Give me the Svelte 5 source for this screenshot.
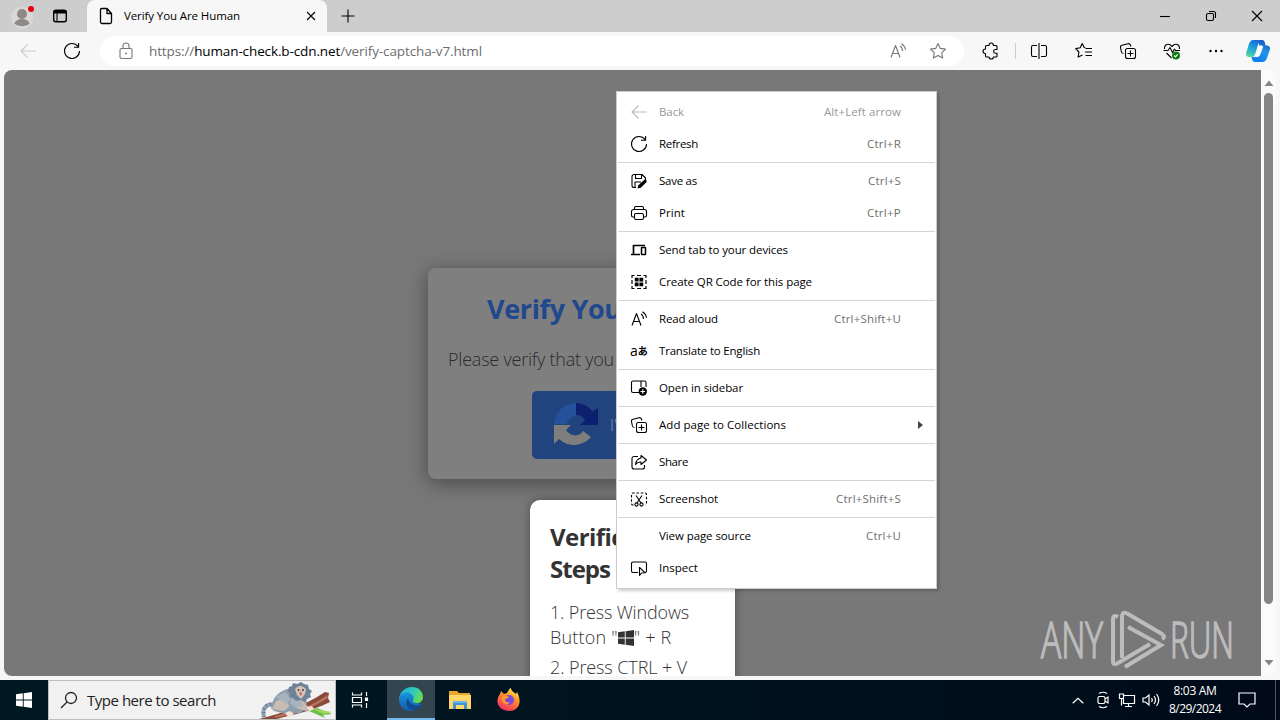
<script lang="ts">
	type Item = { icon?: string; label: string; keys?: string; disabled?: boolean; more?: boolean; w: number; kw?: number };

	const groups: Item[][] = [
		[
			{ icon: 'back', label: 'Back', keys: 'Alt+Left arrow', disabled: true, w: 25, kw: 77 },
			{ icon: 'refresh', label: 'Refresh', keys: 'Ctrl+R', w: 39, kw: 34 }
		],
		[
			{ icon: 'save', label: 'Save as', keys: 'Ctrl+S', w: 38, kw: 33 },
			{ icon: 'print', label: 'Print', keys: 'Ctrl+P', w: 26, kw: 34 }
		],
		[
			{ icon: 'devices', label: 'Send tab to your devices', w: 129 },
			{ icon: 'qr', label: 'Create QR Code for this page', w: 153 }
		],
		[
			{ icon: 'aloud', label: 'Read aloud', keys: 'Ctrl+Shift+U', w: 59, kw: 67 },
			{ icon: 'translate', label: 'Translate to English', w: 101 }
		],
		[{ icon: 'sidebar', label: 'Open in sidebar', w: 84 }],
		[{ icon: 'collections', label: 'Add page to Collections', more: true, w: 127 }],
		[{ icon: 'share', label: 'Share', w: 29 }],
		[{ icon: 'screenshot', label: 'Screenshot', keys: 'Ctrl+Shift+S', w: 59, kw: 65 }],
		[
			{ label: 'View page source', keys: 'Ctrl+U', w: 92, kw: 35 },
			{ icon: 'inspect', label: 'Inspect', w: 39 }
		]
	];

	// Squeezes a label to a given width by spreading the difference over its letters.
	function fit(node: HTMLElement, width?: number) {
		if (!width) return;
		const natural = node.getBoundingClientRect().width;
		const count = node.textContent?.trim().length || 1;
		node.style.letterSpacing = `${(width - natural) / count}px`;
	}
</script>

{#snippet icon(name: string)}
	<svg class="icon" viewBox="0 0 18 18" width="18" height="18">
		{#if name === 'back'}
			<path d="M17 9H2M8.500 2.500 2 9l6.500 6.500" />
		{:else if name === 'refresh'}
			<path d="M15 4.500A7.500 7.500 0 1 0 16.500 9M15.600 1v4.200H11" />
		{:else if name === 'save'}
			<path d="M6 15.500H4a2 2 0 0 1-2-2v-9a2 2 0 0 1 2-2h8l3.500 3.500v2M5.500 2.500v4h6v-4M5 15v-5h6" />
			<path class="solid" d="m7.500 16.500.8-3.300 5.800-5.300c1.500-1 3.300.8 2.200 2.300l-5.500 5.600z" />
		{:else if name === 'print'}
			<path d="M4.500 13H3a1.500 1.500 0 0 1-1.500-1.500v-4a2 2 0 0 1 2-2h11a2 2 0 0 1 2 2v4A1.500 1.500 0 0 1 15 13h-1.500M4.500 5.500V4A1.500 1.500 0 0 1 6 2.500h6A1.500 1.500 0 0 1 13.500 4v1.500" />
			<rect x="4.500" y="9.500" width="9" height="6" rx="1.500" />
		{:else if name === 'devices'}
			<path stroke-width="1.700" d="M3.500 13V4.500H15M1 13.500h9" />
			<rect x="11.500" y="6.500" width="4" height="7" rx=".5" stroke-width="1.500" />
		{:else if name === 'qr'}
			<path stroke-width="1.200" d="M2 5V2.500h2.500M13.500 2.500H16V5M16 13v2.500h-2.500M4.500 15.500H2V13M2 7v4M16 7v4M7 2.500h4M7 15.500h4" />
			<path class="solid" d="M4.800 4.800h3.800v3.800H4.800zM9.400 4.800h3.800v3.800H9.400zM4.800 9.400h3.800v3.800H4.800zM9.400 9.400h3.800v3.800H9.400z" />
		{:else if name === 'aloud'}
			<path d="m2 15.500 4.500-12 4.500 12M3.500 11.500h6M11 4q2.500 1.500 2.500 5M12.500 1.800q3.500 2.200 4 6" />
		{:else if name === 'sidebar'}
			<path d="M9 13.500H3A1.500 1.500 0 0 1 1.500 12V3.500A1.500 1.500 0 0 1 3 2h11.500A1.500 1.500 0 0 1 16 3.500V8M11 2v6" />
			<circle class="solid" cx="12.800" cy="12.500" r="4.200" />
			<path class="cut" d="M10.500 12.500h4.600M12.800 10.200v4.600" />
		{:else if name === 'collections'}
			<rect x="6.500" y="6.500" width="10" height="10" rx="2" />
			<path d="M11.500 8.500v6M8.500 11.500h6M4.500 11.500c-1.500 0-2-1-2.200-2L1.500 5.500c-.3-1.300.4-2 1.500-2.300l6-1.500c1.200-.3 2 .3 2.400 1.300l.6 1.500" />
		{:else if name === 'share'}
			<path d="M8 3.500H4a2 2 0 0 0-2 2V14a2 2 0 0 0 2 2h8.500a2 2 0 0 0 2-2v-2" />
			<path d="M11 2.500 16.500 7 11 11.500V9C8.500 9 6.500 10 5.500 11.500 6 8 8 5.500 11 5z" />
		{:else if name === 'screenshot'}
			<path stroke-dasharray="2.500 1.800" d="M3.500 15H3a1.500 1.500 0 0 1-1.500-1.500v-9A1.500 1.500 0 0 1 3 3h12a1.500 1.500 0 0 1 1.500 1.500v9A1.500 1.500 0 0 1 15 15" />
			<path d="m6 5.500 5 7.500M12 5.500 7 13" />
			<circle cx="6.500" cy="14.500" r="1.600" /><circle cx="11.500" cy="14.500" r="1.600" />
		{:else if name === 'inspect'}
			<path d="M8 13.500H3A1.500 1.500 0 0 1 1.500 12V4.500A1.500 1.500 0 0 1 3 3h12a1.500 1.500 0 0 1 1.500 1.500V12a1.500 1.500 0 0 1-1.500 1.500" />
			<path d="M9.500 8.500v8l2-2.500 3.500-.3z" />
		{:else if name === 'star'}
			<path d="m9 1.500 2.300 4.900 5.200.7-3.800 3.700.9 5.300L9 13.600l-4.600 2.500.9-5.300L1.500 7.100l5.200-.7z" />
		{:else if name === 'lock'}
			<rect x="3" y="6.500" width="12" height="10" rx="1.500" />
			<path d="M6 6.500V4a3 3 0 0 1 6 0v2.500" /><circle class="solid" cx="9" cy="11.500" r=".9" />
		{:else if name === 'puzzle'}
			<path d="M4.500 3.500H7C7 1.800 8 1 9.200 1s2.200.8 2.200 2.500H14a1 1 0 0 1 1 1V7.500h-1.500a1.900 1.900 0 0 0 0 3.800H15V14a1 1 0 0 1-1 1h-2.600c0 1.300-1 2-2.200 2S7 16.300 7 15H4.500a1 1 0 0 1-1-1v-2.500C2 11.500 1 10.500 1 9.300s1-2.300 2.500-2.300V4.500a1 1 0 0 1 1-1z" />
		{:else if name === 'split'}
			<path d="M7 3.500H3A1.500 1.500 0 0 0 1.500 5v8A1.500 1.500 0 0 0 3 14.500h4M11 3.500h4A1.500 1.500 0 0 1 16.500 5v8a1.500 1.500 0 0 1-1.500 1.500h-4M9 1v16" />
		{:else if name === 'favourites'}
			<path d="M10.500 5.800 9.200 5.500 7.200 1.500 5.200 5.800l-4.500.8 3.200 3.400-.8 5L7.500 13M10.500 6.500H17M10 10h7M10.500 13.500H17" />
		{:else if name === 'heart'}
			<path d="M1.500 7C.8 3.500 4 1.200 7 2.700l2 1.800 2-1.800c3-1.500 6.200.8 5.500 4.300M.5 8.500h4.500l2-3 2.500 5 2-3.500 1 1.500h4.500M3.500 11l5 5" />
			<circle cx="13" cy="13.500" r="4" fill="#107c10" stroke="none" />
			<path class="cut" d="m11.200 13.500 1.300 1.300 2.200-2.500" />
		{:else if name === 'tabs'}
			<rect x="2.700" y="3.200" width="12.600" height="11.600" rx="2" stroke-width="1.400" />
			<path class="solid" d="M3 3h12v3.500H3z" /><path d="M6 6v8" />
		{:else if name === 'page'}
			<path stroke-width="1.300" d="M4.500 1.500H10l4.500 5v8.500a1.500 1.500 0 0 1-1.500 1.500H5A1.500 1.500 0 0 1 3.500 15V2.500a1 1 0 0 1 1-1zM10 1.500v5h4.500" />
		{/if}
	</svg>
{/snippet}

{#snippet winlogo()}
	<svg viewBox="0 0 16 16" width="16" height="16" fill="currentColor"><path d="m0 2.300 6.800-1v6.200H0zM7.700 1.200 16 0v7.500H7.700zM0 8.400h6.800v6.300l-6.800-1zM7.700 8.400H16V16l-8.300-1.200z" /></svg>
{/snippet}

<div class="screen">
	<header class="tabbar">
		<div class="profile">
			<svg viewBox="0 0 24 28" width="24" height="28">
				<circle cx="11" cy="16" r="11" fill="#d8d8d8" />
				<circle cx="11" cy="12" r="5" fill="#8e8886" />
				<path d="M3.500 22a7.500 5 0 0 1 15 0 11 8 0 0 1-15 0z" fill="#8e8886" />
				<circle cx="20" cy="7" r="3" fill="#e3000b" />
			</svg>
		</div>
		<div class="tabs-button">{@render icon('tabs')}</div>
		<div class="tab">
			{@render icon('page')}
			<span class="tab-title"><span use:fit={116}>Verify You Are Human</span></span>
			<svg class="line" viewBox="0 0 10 10" width="10" height="10"><path d="m1 1 8 8M9 1 1 9" /></svg>
		</div>
		<svg class="line new-tab" viewBox="0 0 14 14" width="14" height="14"><path d="M7 .5v13M.5 7h13" /></svg>
		<div class="window-buttons">
			<svg class="line" viewBox="0 0 12 12" width="12" height="12"><path d="M1 6.500h10" /></svg>
			<svg class="line" viewBox="0 0 12 12" width="12" height="12"><rect x="1.500" y="3.500" width="7" height="7" rx="1.500" /><path d="M4 1.500h4.500a2 2 0 0 1 2 2V8" /></svg>
			<svg class="line" viewBox="0 0 12 12" width="12" height="12"><path d="m1 1 10 10M11 1 1 11" /></svg>
		</div>
	</header>

	<nav class="toolbar">
		<span class="faint">{@render icon('back')}</span>
		<span class="reload">{@render icon('refresh')}</span>
		<div class="address">
			<span class="grey">{@render icon('lock')}</span>
			<span class="url"><span use:fit={333}>https://<b>human-check.b-cdn.net</b>/verify-captcha-v7.html</span></span>
			<span class="grey">{@render icon('aloud')}</span>
			<span class="grey">{@render icon('star')}</span>
		</div>
		<div class="actions">
			{@render icon('puzzle')}
			<i></i>
			{@render icon('split')}
			<span class="favourites">{@render icon('favourites')}</span>
			{@render icon('collections')}
			{@render icon('heart')}
			<svg class="dots" viewBox="0 0 18 18" width="18" height="18"><circle cx="3.500" cy="9" r="1.200" /><circle cx="9" cy="9" r="1.200" /><circle cx="14.500" cy="9" r="1.200" /></svg>
			<svg class="copilot" viewBox="0 0 24 24" width="24" height="24">
				<defs>
					<linearGradient id="cpa" x1=".6" y1="0" x2=".3" y2="1"><stop offset="0" stop-color="#1569d8" /><stop offset=".5" stop-color="#20a5d8" /><stop offset="1" stop-color="#57d69a" /></linearGradient>
					<linearGradient id="cpb" x1=".7" y1="0" x2=".4" y2="1"><stop offset="0" stop-color="#1452b8" /><stop offset=".5" stop-color="#2196ea" /><stop offset="1" stop-color="#0f7ff0" /></linearGradient>
				</defs>
				<path fill="url(#cpb)" d="M12 1h4c2 0 2.500 1.500 3 3l.6 2.500H21c2.500 0 3.500 2 2.700 4.500l-2.500 7.500c-1 3-2.500 4.500-5 4.500H9c-2 0-2.600-1.500-3-3l-.5-2h3c2 0 2.500-1 3-2.500L13.500 8z" />
				<path fill="url(#cpa)" d="M7.500 1H15c-1.700.5-2.200 2-2.600 3.500L9.500 14c-.8 2.500-2 4-4 4H3c-2.500 0-3.500-2-2.700-4.500l2.500-8C3.700 2.500 5 1 7.500 1z" />
				<path fill="#fff" d="M12.500 6.500h3c1.300 0 1.700 1 1.300 2.200L14.500 15c-.7 2-1.700 3-3.500 3H8.500c1.300-.5 1.800-1.800 2.200-3z" />
			</svg>
		</div>
	</nav>

	<div class="content">
		<main class="page">
			<section class="card">
				<h1><span use:fit={291}>Verify You Are Human</span></h1>
				<p><span use:fit={369}>Please verify that you are a human to continue.</span></p>
				<div class="verify">
					<svg viewBox="0 0 46 46" width="46" height="46">
						<path fill="#25509a" d="M1 22A22 22 0 0 1 23 1v13a9 9 0 0 0-9 8z" />
						<path fill="#0d2070" d="M23 1a22 22 0 0 1 16.500 8.500L45 6v17H27l5-5a10 10 0 0 0-9-5z" />
						<path fill="#7e7e7d" d="M1 23h17l-5 5c4 7 14 7 17 1l8 6A22 22 0 0 1 6 37l-5 5z" />
					</svg>
					<span>I'm not a robot</span>
				</div>
			</section>

			<section class="steps">
				<h2><span use:fit={133}>Verification</span><br /><span use:fit={60}>Steps</span></h2>
				<p><span use:fit={139}>1. Press Windows</span><br /><span class="button-line">Button "{@render winlogo()}" + R</span></p>
				<p><span use:fit={137}>2. Press CTRL + V</span></p>
			</section>

			<div class="watermark">
				<svg viewBox="0 0 194 64" width="194" height="64">
					<text x="2" y="50" textLength="62" lengthAdjust="spacingAndGlyphs">ANY</text>
					<text x="131" y="50" textLength="64" lengthAdjust="spacingAndGlyphs">RUN</text>
					<path d="M79 9q-5-3-5 3v41q0 5 5 2l32-19M83 50V10q0-8 6-4l34 20q4 3 0 5M89 19l33 18-36 22" />
				</svg>
			</div>
		</main>
		<div class="scrollbar">
			<svg viewBox="0 0 10 6" width="10" height="6"><path d="M.5 6 5 .5 9.500 6z" /></svg>
			<div class="thumb"></div>
			<svg viewBox="0 0 10 6" width="10" height="6"><path d="M.5 0 5 5.500 9.500 0z" /></svg>
		</div>
	</div>

	<footer class="taskbar">
		<div class="start">{@render winlogo()}</div>
		<div class="search">
			<svg class="line" viewBox="0 0 18 18" width="18" height="18"><circle cx="11" cy="7" r="5.500" stroke-width="1.300" /><path stroke-width="1.300" d="m7 11-6 6" /></svg>
			<span class="search-text"><span use:fit={129}>Type here to search</span></span>
			<svg class="monkey" viewBox="0 0 76 38" width="76" height="38">
				<path fill="#6cc04c" d="m50 30 8-3 15 6-9 1 2 3z" />
				<path fill="#a5d65a" d="m54 28 19 3-8 2z" />
				<path fill="#8b4a39" d="M0 38c20-5 44-12 66-27l4 1-1 5 2 4c-20 10-39 13-53 17z" />
				<path fill="#b4715c" d="M16 35c20-5 38-10 52-21l1 3c-15 10-33 16-53 20z" />
				<path fill="none" stroke="#8fa3b8" stroke-width="4" d="M20 24C6 21 3 28 5 36" />
				<path fill="none" stroke="#66788c" stroke-width="4" stroke-dasharray="1 3" d="M20 24C6 21 3 28 5 36" />
				<path fill="#8e9eae" d="M12 27c2-12 8-17 20-20l14 8c3 7 2 12-4 17l-15 1-12-3z" />
				<path fill="#c9bcb2" d="M17 20c7-3 13 0 13 6l-5 4-12-2zM31 20c6-5 13-4 16 4l6 4-6 2-10-3z" />
				<path fill="#a7b3bd" d="m17 16 9-5 6 6-4 6-7-4zM33 17l8 2 4 6-8 2-6-4z" />
				<path fill="#6f8398" d="m29 10 1-4 3-1 1-3 4 1 4-2 3 2 4 1 1 4 3 2-2 3 1 3-4 2-2 3-5-2-4 1-3-3-4-1 1-3z" />
				<path fill="#d3c3bb" d="M36 8q5-6 11 0l-1 5-4 5-4-4z" />
				<circle cx="39.500" cy="9" r="1" fill="#5c3630" /><circle cx="44" cy="9" r="1" fill="#5c3630" />
				<path fill="#c76d58" d="m42 10 1 3-1 2-2-2z" />
				<path fill="#f6e1d7" d="m26 32 5-2 4 3-5 4zM48 26l5-1 2 3-5 2z" />
			</svg>
		</div>
		<div class="task task-view">
			<svg viewBox="0 0 18 18" width="18" height="18" fill="none" stroke="#fff" stroke-width="1.200"><path d="M1.500 1.500v2.500h9V1.500M1.500 16.500V14h9v2.500M1.500 6.500h9v5h-9zM15.500 1v4M15.500 12v5" /><path fill="#fff" d="M14.500 7h2v2.500h-2z" /></svg>
		</div>
		<div class="task active">
			<svg viewBox="0 0 24 24" width="24" height="24">
				<defs>
					<linearGradient id="eda" x1="0" y1="0" x2="1" y2=".4"><stop offset="0" stop-color="#20a8df" /><stop offset=".6" stop-color="#30c9bd" /><stop offset="1" stop-color="#62dc58" /></linearGradient>
					<linearGradient id="edb" x1="0" y1="0" x2="0" y2="1"><stop offset="0" stop-color="#1794dd" /><stop offset="1" stop-color="#135cad" /></linearGradient>
				</defs>
				<path fill="url(#eda)" d="M0 12C1 3 8 0 13 0c7 0 11 5 11 10 0 4-3 6-6 6-3 0-5-1-4-3 2-5-7-9-14-1z" />
				<path fill="url(#edb)" d="M0 12C1 6 8 4 12 7c3 2 3 4 2 6-1 2 1 4 5 3l3 1c-3 5-7 7-11 7C5 24 0 19 0 12z" />
				<path fill="#124b91" d="M9 11c-4 6 0 12 6 12 3-1 6-3 7-5-6 2-12-1-13-7z" />
			</svg>
		</div>
		<div class="task">
			<svg viewBox="0 0 22 18" width="22" height="18"><path fill="#e9a52b" d="M0 0h8l2 2h11v4H0z" /><path fill="#ffd667" d="M0 4h22v14H0z" /><path fill="#3a94d6" d="M4 10h14v8h-3v-4H7v4H4z" /><path fill="#69b5e8" d="M4 10h14v2H4z" /></svg>
		</div>
		<div class="task">
			<svg viewBox="0 0 24 24" width="24" height="24">
				<defs><linearGradient id="ff" x1=".8" y1="0" x2=".3" y2="1"><stop offset="0" stop-color="#fff04a" /><stop offset=".45" stop-color="#ff8a2a" /><stop offset="1" stop-color="#f12c64" /></linearGradient></defs>
				<path fill="url(#ff)" d="M3 6l1-3 3 3 3-1c1-2 2-4 4-5 0 3 3 4 5 6l1-2c5 9 3 19-8 19C2 23-3 14 3 6z" />
				<circle cx="12" cy="12" r="5" fill="#7849dc" />
				<path fill="#ff9b2b" d="M5 9c3-2 5-1 7 0-1 2-4 1-4 3s3 3 5 2c-3 5-9 1-8-5z" />
			</svg>
		</div>
		<div class="tray">
			<svg viewBox="0 0 12 7" width="12" height="7"><path d="m.7 6.300 5.300-5 5.300 5" /></svg>
			<svg viewBox="0 0 14 18" width="14" height="18"><rect x="2" y="5.500" width="7" height="7" rx="1.500" /><path d="m9 8 3-2v6L9 10M3 2.500q4-2.500 8 0M3 15.500q4 2.500 8 0" /></svg>
			<svg viewBox="0 0 18 16" width="18" height="16"><path d="M6 3.500h10.500v8H5.500V7M10.500 11.500v3M7 14.500h7M1.500 2h4v4.500h-4zM3.500 6.500v7" /></svg>
			<svg viewBox="0 0 18 14" width="18" height="14"><path d="M1 5h2.500L7 2v10L3.500 9H1zM9.500 5q1.500 2 0 4M12 3q3 4 0 8M14.500 1q4.500 6 0 12" /></svg>
		</div>
		<div class="clock"><span use:fit={43}>8:03 AM</span><span use:fit={52}>8/29/2024</span></div>
		<svg class="notice" viewBox="0 0 18 18" width="18" height="18"><path d="M1 2h16v11h-5l-3 3-3-3H1z" /></svg>
		<div class="peek"></div>
	</footer>

	<div class="menu">
		{#each groups as items, i}
			{#if i > 0}<hr />{/if}
			{#each items as item}
				<div class="item" class:disabled={item.disabled}>
					<span class="item-icon">
						{#if item.icon === 'translate'}
							<span class="translate">a<small>あ</small></span>
						{:else if item.icon}
							{@render icon(item.icon)}
						{/if}
					</span>
					<span class="label"><span use:fit={item.w}>{item.label}</span></span>
					{#if item.keys}<span class="keys"><span use:fit={item.kw}>{item.keys}</span></span>{/if}
					{#if item.more}<svg class="more" viewBox="0 0 5 8" width="5" height="8"><path d="m0 0 5 4-5 4z" /></svg>{/if}
				</div>
			{/each}
		{/each}
	</div>
</div>

<style>
	:global(body) {
		margin: 0;
		overflow: hidden;
	}

	.screen {
		position: relative;
		display: flex;
		flex-direction: column;
		width: 1280px;
		height: 720px;
		overflow: hidden;
		background: #f7f7f7;
		color: #000;
		font-family: 'Open Sans', 'Noto Sans', 'Noto Sans CJK JP', sans-serif;
		font-size: 11.5px;
		white-space: nowrap;
	}

	svg {
		display: block;
		flex: none;
	}

	.icon,
	.line {
		fill: none;
		stroke: currentColor;
		stroke-width: 1.1;
		stroke-linejoin: round;
	}

	.icon .solid {
		fill: currentColor;
		stroke: none;
	}

	.icon .cut {
		stroke: #fff;
	}

	.tabbar {
		display: flex;
		align-items: center;
		height: 32px;
		background: #cdcdcd;
	}

	.profile {
		width: 40px;
		padding-left: 11px;
	}

	.tabs-button {
		width: 36px;
	}

	.tab {
		display: flex;
		align-items: center;
		box-sizing: border-box;
		width: 240px;
		height: 32px;
		padding: 0 11px 0 10px;
		border-radius: 8px 8px 0 0;
		background: #f7f7f7;
	}

	.tab-title {
		flex: 1;
		padding: 0 0 1px 9px;
	}

	.new-tab {
		margin-left: 14px;
	}

	.window-buttons {
		display: flex;
		gap: 34px;
		margin-left: auto;
		padding-right: 17px;
	}

	.toolbar {
		display: flex;
		align-items: center;
		flex: none;
		box-sizing: border-box;
		height: 38px;
		padding-left: 19px;
	}

	.faint {
		color: #ccc;
	}

	.reload {
		margin-left: 26px;
	}

	.address {
		display: flex;
		align-items: center;
		box-sizing: border-box;
		width: 864px;
		height: 30px;
		margin-left: 19px;
		padding: 0 17px;
		border-radius: 15px;
		background: #fff;
		color: #6d6d6d;
	}

	.url {
		flex: 1;
		padding-left: 14px;
		font-size: 13.5px;
	}

	.url b {
		color: #000;
		font-weight: 400;
	}

	.grey + .grey {
		margin-left: 22px;
	}

	.grey {
		color: #777;
	}

	.actions {
		display: flex;
		align-items: center;
		gap: 26px;
		margin-left: 18px;
	}

	.actions i {
		width: 1px;
		height: 16px;
		margin: 0 -12px 0 -11px;
		background: #ccc;
	}

	.favourites {
		margin-left: 1px;
	}

	.dots {
		fill: #000;
	}

	.copilot {
		margin-left: -5px;
	}

	.content {
		display: flex;
		flex: none;
		height: 606px;
		margin: 0 4px 4px;
		overflow: hidden;
		border-radius: 8px;
		background: #fbfbfb;
	}

	.page {
		position: relative;
		display: flex;
		flex-direction: column;
		align-items: center;
		width: 1257px;
		overflow: hidden;
		background: #787878;
	}

	.card {
		flex: none;
		box-sizing: border-box;
		width: 409px;
		height: 211px;
		margin-top: 198px;
		padding: 19px 20px;
		border-radius: 8px;
		background: #7f7f7f;
		box-shadow: 0 4px 20px rgba(0, 0, 0, 0.4);
	}

	h1 {
		margin: 0;
		color: #21478c;
		font-size: 27px;
		line-height: 43px;
		text-align: center;
	}

	.card p {
		margin: 20px 0 0;
		color: #2b2b2b;
		font-size: 18px;
		font-weight: 300;
		line-height: 18px;
	}

	.verify {
		display: flex;
		align-items: center;
		gap: 11px;
		box-sizing: border-box;
		width: 201px;
		height: 68px;
		margin: 23px auto 0;
		padding: 0 21px;
		border-radius: 5px;
		background: #21437e;
		color: #8e9ab1;
		font-size: 16px;
		font-weight: 300;
	}

	.steps {
		flex: none;
		box-sizing: border-box;
		width: 205px;
		height: 260px;
		margin-top: 21px;
		padding: 21px 20px;
		border-radius: 10px;
		background: #fff;
		box-shadow: 0 0 10px rgba(0, 0, 0, 0.35);
		color: #333;
	}

	h2 {
		margin: 0 0 15px;
		font-size: 24px;
		line-height: 32px;
	}

	.steps p {
		margin: 0 0 5px;
		font-size: 18px;
		font-weight: 300;
		line-height: 25px;
	}

	.button-line {
		letter-spacing: 0.2px;
	}

	.button-line svg {
		display: inline-block;
		vertical-align: -2px;
	}

	.watermark {
		position: absolute;
		right: 28px;
		bottom: 4px;
	}

	.watermark text {
		fill: #bcbcbc;
		stroke: #bcbcbc;
		stroke-width: 1.6;
		font: 300 49px 'Open Sans', sans-serif;
	}

	.watermark path {
		fill: none;
		stroke: #bcbcbc;
		stroke-width: 4;
	}

	.scrollbar {
		display: flex;
		flex: 1;
		flex-direction: column;
		align-items: center;
		padding: 10px 0;
		fill: #858585;
	}

	.thumb {
		width: 9px;
		height: 512px;
		margin: 7px 0 56px;
		border-radius: 5px;
		background: #858585;
	}

	.taskbar {
		display: flex;
		align-items: center;
		height: 40px;
		background: linear-gradient(90deg, #001821, #00141f 45%, #000a19);
		color: #fff;
	}

	.start {
		width: 32px;
		padding-left: 16px;
	}

	.search {
		display: flex;
		align-items: center;
		box-sizing: border-box;
		width: 288px;
		height: 40px;
		padding-left: 11px;
		overflow: hidden;
		border: 1px solid #bdbdbd;
		background: #f1f1f1;
		color: #222;
	}

	.search-text {
		flex: 1;
		padding-left: 9px;
		font-size: 15px;
	}

	.task {
		display: flex;
		align-items: center;
		justify-content: center;
		box-sizing: border-box;
		width: 48px;
		height: 40px;
		margin-right: 1px;
	}

	.task-view {
		margin-right: 3px;
	}

	.active {
		border-bottom: 2px solid #76b9ed;
		background: #33464f;
	}

	.tray {
		display: flex;
		align-items: center;
		gap: 9px;
		margin-left: auto;
	}

	.tray svg,
	.notice {
		fill: none;
		stroke: #fff;
		stroke-width: 1.2;
	}

	.tray svg:nth-child(2) {
		margin-left: 3px;
	}

	.tray svg:nth-child(3) {
		margin-left: -1px;
	}

	.tray svg:nth-child(4) {
		margin-left: -3px;
	}

	.clock {
		display: flex;
		flex-direction: column;
		align-items: center;
		width: 70px;
		font-size: 12px;
		line-height: 18px;
	}

	.notice {
		margin-left: 8px;
	}

	.peek {
		width: 4px;
		height: 40px;
		margin-left: 19px;
		border-left: 1px solid #4d5662;
	}

	.menu {
		position: absolute;
		top: 91px;
		left: 616px;
		box-sizing: border-box;
		width: 321px;
		padding: 4px 1px;
		border: 1px solid #ccc;
		background: #fff;
		box-shadow: 2px 2px 3px rgba(0, 0, 0, 0.2);
	}

	hr {
		height: 1px;
		margin: 2px 0;
		border: 0;
		background: #d5d5d5;
	}

	.item {
		display: flex;
		align-items: center;
		height: 32px;
		padding: 0 12px;
	}

	.item-icon {
		width: 29px;
	}

	.label {
		flex: 1;
		padding-bottom: 1px;
	}

	.keys {
		margin-right: 22px;
		padding-bottom: 1px;
		color: #6f6f6f;
	}

	.disabled,
	.disabled .keys {
		color: #999;
	}

	.disabled .icon {
		color: #bbb;
	}

	.more {
		fill: #444;
	}

	.translate {
		display: flex;
		align-items: center;
		height: 18px;
		font-size: 14px;
		line-height: 18px;
	}

	.translate small {
		font-size: 10px;
		font-weight: 700;
	}
</style>
